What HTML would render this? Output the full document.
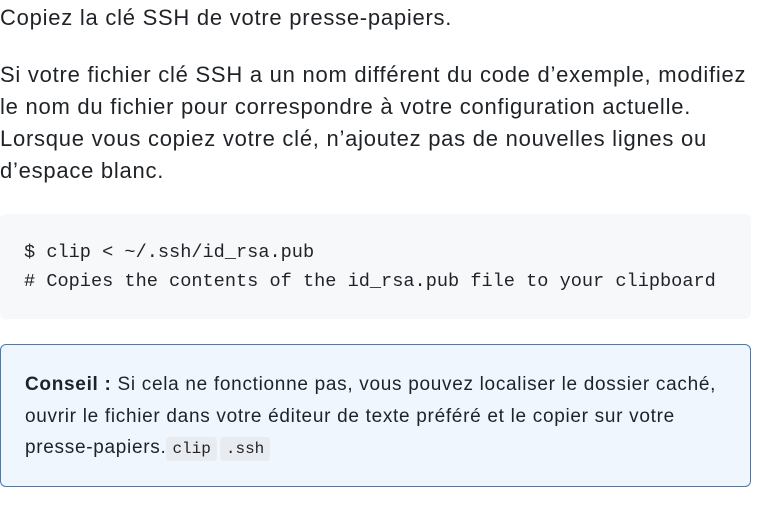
<!DOCTYPE html>
<html><head><meta charset="utf-8"><style>
body{margin:0;width:762px;height:517px;overflow:hidden;background:#fff;font-family:"Liberation Sans",sans-serif;color:#1f2328}
p{margin:0;font-size:22px;letter-spacing:0.75px;line-height:32px;white-space:nowrap}
.p1{position:absolute;top:2px;left:0}
.p2{position:absolute;top:59px;left:0}
pre{position:absolute;top:214px;left:0;width:751px;height:105px;margin:0;background:#f6f8fa;border-radius:6px;box-sizing:border-box;padding:24px 24px;font-family:"Liberation Mono",monospace;font-size:18.6px;line-height:29px;color:#1f2328}
.note{position:absolute;top:344px;left:0;width:751px;height:143px;box-sizing:border-box;border:1px solid #4a79b8;border-radius:6px;background:#f0f6fd;padding:24px 24px}
.note p{font-size:19px;letter-spacing:0.7px;line-height:31.5px}
code{font-family:"Liberation Mono",monospace;font-size:16px;letter-spacing:0;background:#e8ebef;border-radius:4px;padding:3px 6px;margin-right:3px}
</style></head><body>
<p class="p1">Copiez la clé SSH de votre presse-papiers.</p>
<p class="p2">Si votre fichier clé SSH a un nom différent du code d’exemple, modifiez<br>le nom du fichier pour correspondre à votre configuration actuelle.<br>Lorsque vous copiez votre clé, n’ajoutez pas de nouvelles lignes ou<br>d’espace blanc.</p>
<pre>$ clip &lt; ~/.ssh/id_rsa.pub
# Copies the contents of the id_rsa.pub file to your clipboard</pre>
<div class="note"><p><b>Conseil :</b> Si cela ne fonctionne pas, vous pouvez localiser le dossier caché,<br>ouvrir le fichier dans votre éditeur de texte préféré et le copier sur votre<br>presse-papiers.<code>clip</code><code>.ssh</code></p></div>
</body></html>
